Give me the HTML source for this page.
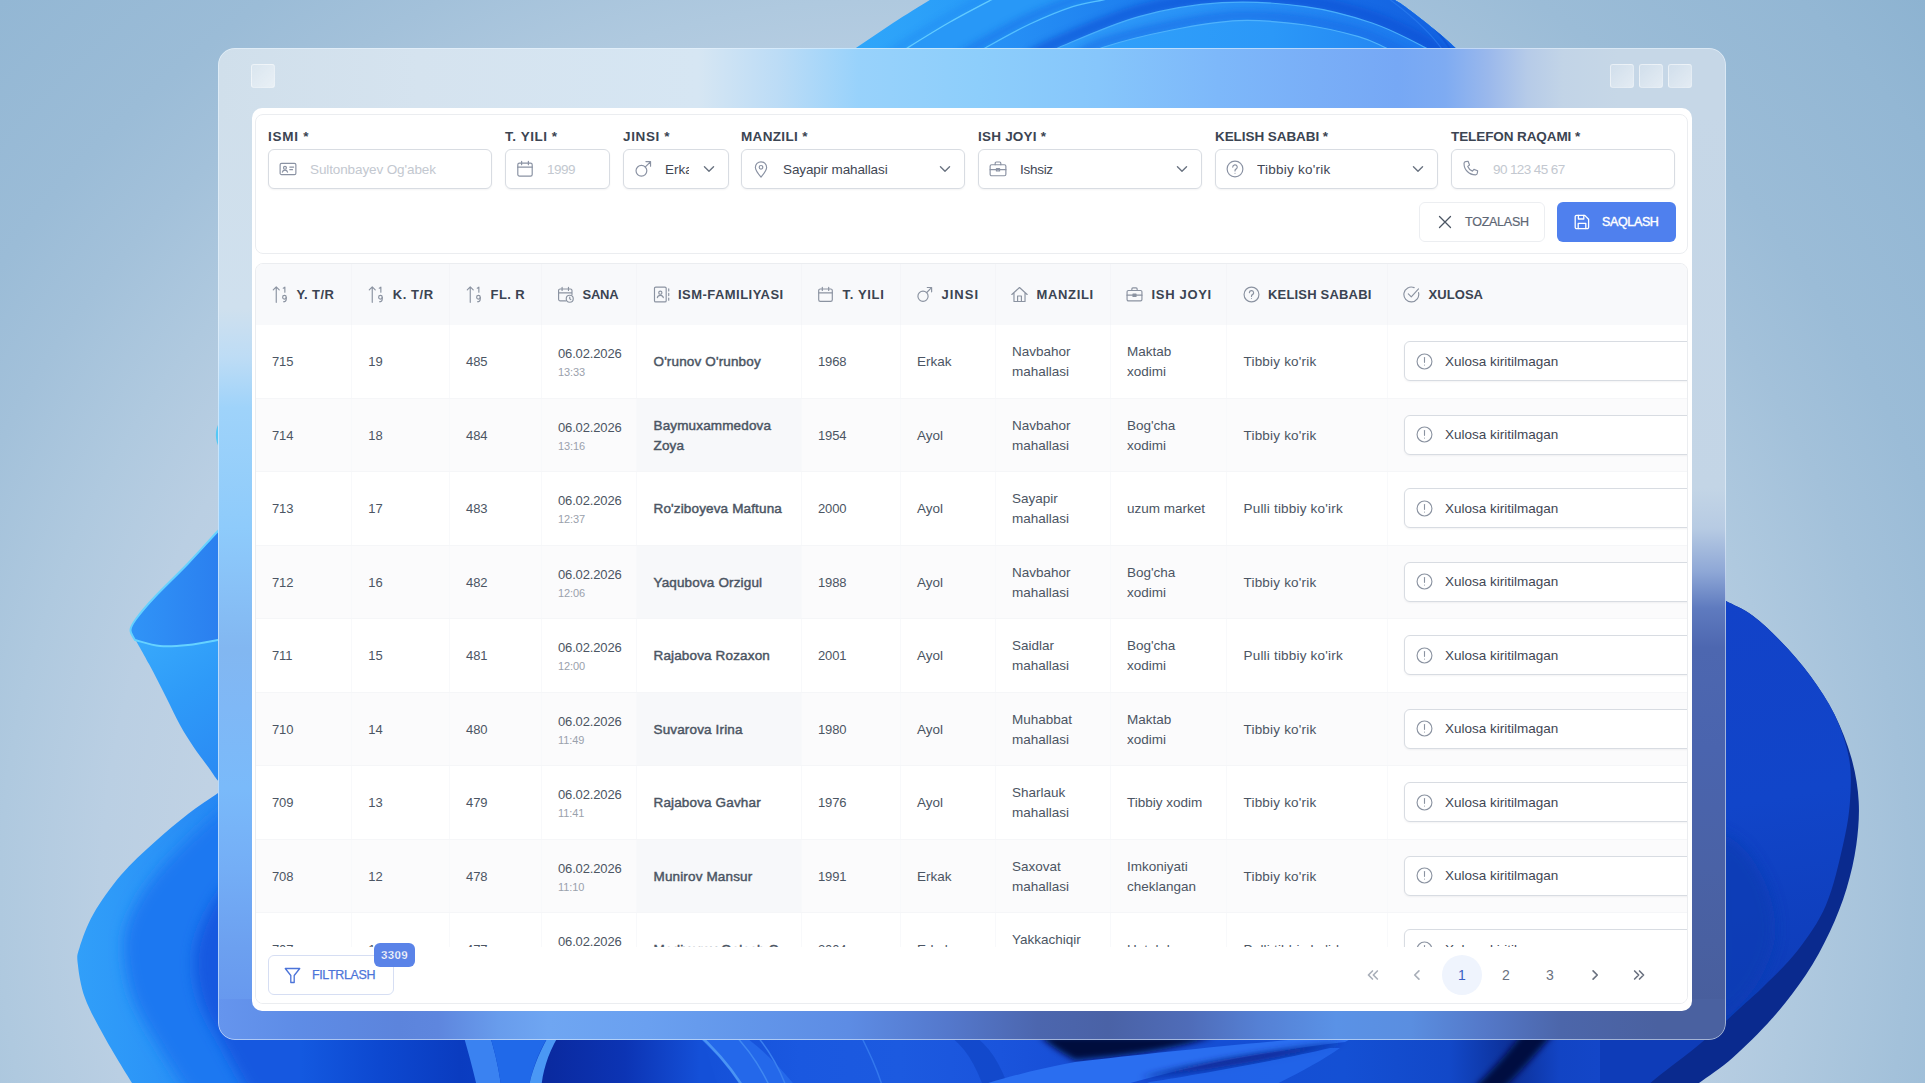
<!DOCTYPE html>
<html lang="uz">
<head>
<meta charset="utf-8">
<title>Qabul jurnali</title>
<style>
*{box-sizing:border-box;margin:0;padding:0}
html,body{width:1925px;height:1083px;overflow:hidden;background:#a9c3dc}
body{font-family:"Liberation Sans",sans-serif;color:#4b5563;position:relative}
#bg{position:absolute;left:0;top:0;width:1925px;height:1083px;display:block}
#win{position:absolute;left:218px;top:48px;width:1508px;height:992px;border-radius:17px;overflow:hidden;
  }
#win:after{content:'';position:absolute;inset:0;border-radius:17px;border:1.5px solid rgba(235,245,255,.55)}
#win .strip{position:absolute}
#st-top{left:0;top:0;width:1508px;height:72px;
  background:linear-gradient(90deg,#d0dfeb 0px,#d5e3ef 200px,#d6e6f3 480px,#bcdcf6 560px,#98d2fb 640px,#8dcefb 760px,#86c6fb 880px,#7db8fa 1000px,#79aef7 1100px,#76a8f5 1180px,#7eabf2 1227px,#9ab8ec 1270px,#b6cbe8 1310px,#c2d4e7 1345px,#c6d7e7 1400px,#c6d7e7 1508px)}
#st-left{left:0;top:60px;width:46px;height:905px;
  background:linear-gradient(180deg,#d0dfeb 0px,#cfe0ee 200px,#bddcf5 250px,#9fd3fa 300px,#8ecbfb 420px,#88c1f7 480px,#82b7f1 540px,#7fb8f6 600px,#7abafa 680px,#74aef6 760px,#6ca0f0 840px,#6697ee 905px)}
#st-right{right:0;top:60px;width:46px;height:905px;
  background:linear-gradient(180deg,#c6d7e7 0px,#c3d5e6 380px,#b7cbe3 420px,#8ea7d6 464px,#5f7bbf 500px,#4d67b0 540px,#4a64ae 640px,#4a62a6 760px,#485e9c 905px)}
#st-bot{left:0;bottom:0;width:1508px;height:41px;
  background:linear-gradient(90deg,#6595ee 0px,#5e8ce6 80px,#5c84dc 180px,#5e86de 220px,#689cec 280px,#6fa6f2 330px,#6aa0f0 430px,#6296ea 530px,#5d8ce4 630px,#5478cc 730px,#4c66ae 820px,#4a62a6 890px,#4f6cb8 970px,#5580d4 1040px,#5a92e6 1118px,#5a8ee0 1193px,#5478c8 1268px,#4c66aa 1343px,#4a61a0 1440px,#4a61a0 1508px)}
#panel{position:absolute;left:252px;top:108px;width:1440px;height:903px;background:#fff;border-radius:10px;overflow:hidden}
.tb{position:absolute;width:24px;height:24px;top:64px;border-radius:3px;background:linear-gradient(135deg,rgba(255,255,255,.2),rgba(255,255,255,.52));border:1.5px solid rgba(255,255,255,.38)}

.ic{width:16px;height:16px;fill:none;stroke:currentColor;stroke-width:1.15;stroke-linecap:round;stroke-linejoin:round;flex:none;display:block}
#form{position:absolute;left:3px;top:6px;width:1433px;height:140px;border:1px solid #ebedf0;border-radius:8px;background:#fff}
.fld{position:absolute;top:15px}
.fld label{display:block;font-weight:bold;font-size:13.5px;letter-spacing:.3px;color:#3b4452;line-height:14px;height:14px;margin-bottom:5px;white-space:nowrap}
.inp{height:40px;border:1px solid #d8dce2;border-radius:6px;background:#fff;display:flex;align-items:center;padding:0 12px 0 10px;font-size:13.5px;color:#3f4754;box-shadow:0 1px 2px rgba(16,24,40,.05);white-space:nowrap;overflow:hidden}
.inp .ic{color:#8a92a3;margin-right:13px;width:18px;height:18px;stroke-width:1.05}
.inp span{flex:1;overflow:hidden}
.inp.ph span{color:#c3c8d0}
.inp .chev{margin:0;color:#6b7482;width:14px;height:14px;stroke-width:1.6}
.btn{position:absolute;display:flex;align-items:center;height:40px;border-radius:6px;font-size:13.5px;white-space:nowrap}
.b-clear{left:1163px;top:87px;width:126px;border:1px solid #eceef1;color:#5d6674;padding-left:17px;background:#fff;font-size:12.5px;-webkit-text-stroke:.2px #5d6674}
.b-clear .ic{margin-right:12px;color:#4b5563;stroke-width:1.3}
.b-save{left:1301px;top:87px;width:119px;background:#4f80ee;color:#fff;padding-left:17px;font-size:12.5px;-webkit-text-stroke:.4px #fff}
.b-save .ic{margin-right:12px;stroke-width:1.3}
#tbl{position:absolute;left:3px;top:155px;width:1433px;height:741px;border:1px solid #ebedf0;border-radius:8px;background:#fff;overflow:hidden}
.thead{display:flex;height:61px;background:#f8f9fb;width:1500px}
.th{display:flex;align-items:center;padding:0 0 .5px 16px;font-weight:bold;font-size:13px;letter-spacing:.4px;color:#3b4452;border-right:1px solid #f4f5f8;white-space:nowrap}
.th .ic{color:#8b93a1;margin:0 8px 0 -.5px;width:17px;height:17px;stroke-width:1.1}
.tbody{height:622px;overflow:hidden}
.tr{display:flex;height:73.5px;width:1500px;border-bottom:1px solid #f5f6f8}
.tr.alt{background:#fbfbfc}
.td{display:flex;align-items:center;padding:2.4px 0 0 16px;font-size:13.5px;color:#4b5563;border-right:1px solid #f8f9fb;line-height:20px}
.c0,.c1,.c2,.c5{font-size:13px;letter-spacing:-.15px}
.c3{font-size:13px;letter-spacing:-.15px}
.c9{letter-spacing:.2px}
.tr.alt .c4{background:#f7f8fa}
.td.c10{padding-top:0}
.td small{display:block;font-size:11px;color:#9aa1ac;line-height:15px;letter-spacing:-.1px;margin-top:1px}
.td b{font-weight:normal;font-size:13.5px;color:#4b5563;letter-spacing:.15px;-webkit-text-stroke:.45px #4b5563}
.xbox{width:400px;height:40px;border:1px solid #d8dce2;border-radius:6px;display:flex;align-items:center;padding:1.2px 0 0 11px;background:#fff;box-shadow:0 1px 2px rgba(16,24,40,.05);color:#3f4754;white-space:nowrap}
.xbox .ic{color:#8b93a1;margin:-1px 12px 0 0;width:17px;height:17px;stroke-width:1.05}
.tfoot{position:absolute;left:0;top:684px;width:1436px;height:56px;background:#fff}
.b-filter{left:12px;top:7px;width:126px;border:1px solid #d6def3;color:#4c74d9;padding-left:16px;background:#fff;font-size:12.5px;-webkit-text-stroke:.25px #4c74d9}
.b-filter .ic{margin:0 11px 0 -1px;stroke-width:1.25;width:17px;height:17px}
.badge{position:absolute;left:105px;top:-13px;width:41px;height:24px;border-radius:6px;background:#5a83e8;color:#fff;font-style:normal;font-weight:bold;font-size:11.5px;text-align:center;line-height:24px}
.pager{position:absolute;left:0;top:6.5px;height:40px}
.pg{position:absolute;top:0;width:40px;height:40px;border-radius:50%;display:flex;align-items:center;justify-content:center;font-size:14px;color:#6b7280}
.pg.act{background:#eff4fd;color:#3b5fc4}
.pg.dis{color:#a9afb9}
.pg .ic{width:14px;height:14px;stroke-width:1.9}
</style>
</head>
<body>
<svg id="bg" viewBox="0 0 1925 1083">
<defs>
<radialGradient id="sky" cx="900" cy="900" r="1400" gradientUnits="userSpaceOnUse">
<stop offset="0" stop-color="#c2d3e5"/><stop offset=".5" stop-color="#c0d2e4"/><stop offset=".571" stop-color="#bacfe3"/><stop offset=".643" stop-color="#afc9df"/><stop offset=".721" stop-color="#a3c1da"/><stop offset=".786" stop-color="#9bbcd7"/><stop offset=".909" stop-color="#93b7d4"/><stop offset=".975" stop-color="#8db3d1"/><stop offset="1" stop-color="#8bb2d0"/>
</radialGradient>
<linearGradient id="gTop" x1="858" y1="0" x2="1456" y2="0" gradientUnits="userSpaceOnUse">
<stop offset="0" stop-color="#2fa6fa"/><stop offset=".3" stop-color="#2596f7"/><stop offset=".6" stop-color="#1e86f3"/><stop offset="1" stop-color="#1668e6"/>
</linearGradient>
<linearGradient id="gP2" x1="986" y1="0" x2="1420" y2="0" gradientUnits="userSpaceOnUse">
<stop offset="0" stop-color="#2792f6"/><stop offset=".4" stop-color="#1c7cee"/><stop offset="1" stop-color="#1464e2"/>
</linearGradient>
<linearGradient id="gP3" x1="1059" y1="0" x2="1425" y2="0" gradientUnits="userSpaceOnUse">
<stop offset="0" stop-color="#2e9af8"/><stop offset=".5" stop-color="#2890f6"/><stop offset="1" stop-color="#1c78ee"/>
</linearGradient>
<linearGradient id="gP4" x1="1102" y1="0" x2="1385" y2="0" gradientUnits="userSpaceOnUse">
<stop offset="0" stop-color="#30a0fa"/><stop offset=".6" stop-color="#2b98f8"/><stop offset="1" stop-color="#2488f3"/>
</linearGradient>
<linearGradient id="gE3" x1="0" y1="0" x2="0" y2="50" gradientUnits="userSpaceOnUse">
<stop offset="0" stop-color="#1462e2"/><stop offset="1" stop-color="#1a78ee"/>
</linearGradient>
<linearGradient id="gCupIn" x1="131" y1="0" x2="232" y2="0" gradientUnits="userSpaceOnUse">
<stop offset="0" stop-color="#3094f7"/><stop offset="1" stop-color="#2a7cee"/>
</linearGradient>
<linearGradient id="gCupOut" x1="131" y1="640" x2="232" y2="780" gradientUnits="userSpaceOnUse">
<stop offset="0" stop-color="#38aafc"/><stop offset=".45" stop-color="#2e9af8"/><stop offset="1" stop-color="#2a88f3"/>
</linearGradient>
<linearGradient id="gLow" x1="77" y1="0" x2="232" y2="0" gradientUnits="userSpaceOnUse">
<stop offset="0" stop-color="#319ff9"/><stop offset=".5" stop-color="#2b94f7"/><stop offset="1" stop-color="#2585f3"/>
</linearGradient>
<linearGradient id="gBot" x1="218" y1="0" x2="1720" y2="0" gradientUnits="userSpaceOnUse">
<stop offset="0.000" stop-color="#1359e0"/><stop offset="0.055" stop-color="#1359e0"/><stop offset="0.108" stop-color="#0d48d0"/><stop offset="0.161" stop-color="#0a3cc0"/><stop offset="0.321" stop-color="#1450d8"/><stop offset="0.387" stop-color="#1a58e0"/><stop offset="0.454" stop-color="#1c5ae0"/><stop offset="0.521" stop-color="#1a54dc"/><stop offset="0.587" stop-color="#164cd4"/><stop offset="0.750" stop-color="#1450d4"/><stop offset="0.820" stop-color="#1248c8"/><stop offset="0.861" stop-color="#0c3098"/><stop offset="0.893" stop-color="#1244c4"/><stop offset="0.944" stop-color="#1448cc"/><stop offset="0.987" stop-color="#1040c0"/><stop offset="1.000" stop-color="#1040c0"/>
</linearGradient>
<linearGradient id="gNavy" x1="550" y1="0" x2="700" y2="0" gradientUnits="userSpaceOnUse"><stop offset="0" stop-color="#0a2aa0"/><stop offset=".5" stop-color="#0c34b4"/><stop offset="1" stop-color="#1450d8"/></linearGradient>
<linearGradient id="gRight" x1="1726" y1="600" x2="1800" y2="1000" gradientUnits="userSpaceOnUse">
<stop offset="0" stop-color="#1242c8"/><stop offset=".5" stop-color="#1145c9"/><stop offset="1" stop-color="#0e3cb8"/>
</linearGradient>
<filter id="b6" x="-30%" y="-30%" width="160%" height="160%"><feGaussianBlur stdDeviation="7"/></filter>
<filter id="b3" x="-30%" y="-30%" width="160%" height="160%"><feGaussianBlur stdDeviation="3"/></filter>
<clipPath id="cLow"><path d="M236.0,781.0 C233.0,783.0 226.0,787.5 218.0,793.0 C210.0,798.5 198.6,805.8 188.0,814.0 C177.4,822.2 165.9,831.8 154.7,842.0 C143.5,852.2 131.2,863.0 121.0,875.0 C110.8,887.0 100.3,901.9 93.4,914.0 C86.5,926.1 82.1,939.4 79.5,947.7 C76.9,956.0 76.9,955.6 77.8,964.0 C78.7,972.4 80.5,985.8 85.0,998.0 C89.5,1010.2 96.7,1022.8 104.5,1037.0 C112.3,1051.2 126.1,1073.3 132.0,1083.0 C137.9,1092.7 138.7,1093.0 140.0,1095.0 L300,1095 L300,781 Z"/></clipPath>
<clipPath id="cRight"><path d="M1712.0,594.0 C1714.3,595.2 1719.3,597.4 1726.0,601.0 C1732.7,604.6 1743.2,608.7 1752.4,615.5 C1761.6,622.3 1771.7,631.9 1781.4,642.0 C1791.1,652.1 1801.6,663.9 1810.4,676.0 C1819.2,688.1 1828.1,700.8 1834.5,714.5 C1840.9,728.2 1846.4,743.6 1849.0,758.0 C1851.6,772.4 1851.0,786.5 1850.0,801.0 C1849.0,815.5 1847.0,827.7 1843.0,845.0 C1839.0,862.3 1833.5,887.5 1826.0,905.0 C1818.5,922.5 1808.2,936.7 1798.0,950.0 C1787.8,963.3 1774.7,975.3 1765.0,985.0 C1755.3,994.7 1748.2,1000.5 1740.0,1008.0 C1731.8,1015.5 1724.3,1022.7 1716.0,1030.0 C1707.7,1037.3 1699.3,1044.5 1690.0,1052.0 C1680.7,1059.5 1668.3,1068.3 1660.0,1075.0 C1651.7,1081.7 1643.3,1089.2 1640.0,1092.0 L1600,1092 L1600,594 Z"/></clipPath>
<clipPath id="cTop"><path d="M820.0,72.0 C826.1,67.9 844.4,55.7 856.6,47.5 C868.8,39.3 880.8,30.9 893.0,23.0 C905.2,15.1 921.1,5.3 929.8,0.0 C938.5,-5.3 942.5,-7.5 945.0,-9.0 L1380,-10 C1382.5,-8.3 1390.8,-2.8 1395.0,0.0 C1399.2,2.8 1398.3,1.6 1405.0,6.6 C1411.7,11.6 1426.7,23.2 1435.0,30.0 C1443.3,36.8 1449.2,41.8 1455.0,47.5 C1460.8,53.2 1467.5,61.2 1470.0,64.0 Z"/></clipPath>
</defs>
<rect width="1925" height="1083" fill="url(#sky)"/>
<!-- top bloom -->
<path d="M820.0,72.0 C826.1,67.9 844.4,55.7 856.6,47.5 C868.8,39.3 880.8,30.9 893.0,23.0 C905.2,15.1 921.1,5.3 929.8,0.0 C938.5,-5.3 942.5,-7.5 945.0,-9.0 L1380,-10 C1382.5,-8.3 1390.8,-2.8 1395.0,0.0 C1399.2,2.8 1398.3,1.6 1405.0,6.6 C1411.7,11.6 1426.7,23.2 1435.0,30.0 C1443.3,36.8 1449.2,41.8 1455.0,47.5 C1460.8,53.2 1467.5,61.2 1470.0,64.0 Z" fill="url(#gTop)"/>
<g clip-path="url(#cTop)">
<path d="M880.0,66.0 C884.7,62.9 896.3,54.8 908.0,47.5 C919.7,40.2 936.2,29.9 950.0,22.0 C963.8,14.1 981.0,5.2 991.0,0.0 C1001.0,-5.2 1006.8,-7.5 1010.0,-9.0" fill="none" stroke="#1a80f0" stroke-width="8" opacity=".35" filter="url(#b3)" transform="translate(-3,-4)"/>
<path d="M880.0,66.0 C884.7,62.9 896.3,54.8 908.0,47.5 C919.7,40.2 936.2,29.9 950.0,22.0 C963.8,14.1 981.0,5.2 991.0,0.0 C1001.0,-5.2 1006.8,-7.5 1010.0,-9.0 L1500,-10 L1500,80 L880,80 Z" fill="#2898f7"/>
<path d="M955.0,66.0 C960.2,62.9 973.5,54.5 986.0,47.5 C998.5,40.5 1015.5,30.8 1030.0,24.0 C1044.5,17.2 1060.6,10.6 1072.7,6.6 C1084.8,2.6 1093.9,1.9 1102.6,0.0 C1111.3,-1.9 1121.3,-4.2 1125.0,-5.0" fill="none" stroke="#1670e8" stroke-width="10" opacity=".55" filter="url(#b3)" transform="translate(-3,-5)"/>
<path d="M955.0,66.0 C960.2,62.9 973.5,54.5 986.0,47.5 C998.5,40.5 1015.5,30.8 1030.0,24.0 C1044.5,17.2 1060.6,10.6 1072.7,6.6 C1084.8,2.6 1093.9,1.9 1102.6,0.0 C1111.3,-1.9 1121.3,-4.2 1125.0,-5.0 L1500,-10 L1500,80 L955,80 Z" fill="url(#gP2)"/>
<path d="M1030.0,62.0 C1034.8,59.6 1040.8,55.1 1059.0,47.5 C1077.2,39.9 1111.8,24.1 1139.0,16.6 C1166.2,9.1 1194.3,4.4 1222.0,2.7 C1249.7,1.0 1280.0,3.2 1305.0,6.6 C1330.0,10.0 1352.0,16.2 1372.0,23.0 C1392.0,29.8 1412.0,40.7 1425.0,47.5 C1438.0,54.3 1445.8,61.2 1450.0,64.0" fill="none" stroke="#0c50d4" stroke-width="12" opacity=".6" filter="url(#b3)" transform="translate(0,-6)"/>
<path d="M1030.0,62.0 C1034.8,59.6 1040.8,55.1 1059.0,47.5 C1077.2,39.9 1111.8,24.1 1139.0,16.6 C1166.2,9.1 1194.3,4.4 1222.0,2.7 C1249.7,1.0 1280.0,3.2 1305.0,6.6 C1330.0,10.0 1352.0,16.2 1372.0,23.0 C1392.0,29.8 1412.0,40.7 1425.0,47.5 C1438.0,54.3 1445.8,61.2 1450.0,64.0 L1450,80 L1030,80 Z" fill="url(#gP3)"/>
<path d="M1075.0,62.0 C1079.6,59.6 1086.4,52.8 1102.6,47.5 C1118.8,42.2 1149.3,34.5 1172.0,30.0 C1194.7,25.5 1216.8,21.4 1239.0,20.6 C1261.2,19.8 1285.1,22.3 1305.0,25.0 C1324.9,27.7 1345.3,32.9 1358.6,36.6 C1371.9,40.4 1376.4,43.6 1385.0,47.5 C1393.6,51.4 1405.8,57.9 1410.0,60.0" fill="none" stroke="#1668e4" stroke-width="10" opacity=".55" filter="url(#b3)" transform="translate(0,-5)"/>
<path d="M1075.0,62.0 C1079.6,59.6 1086.4,52.8 1102.6,47.5 C1118.8,42.2 1149.3,34.5 1172.0,30.0 C1194.7,25.5 1216.8,21.4 1239.0,20.6 C1261.2,19.8 1285.1,22.3 1305.0,25.0 C1324.9,27.7 1345.3,32.9 1358.6,36.6 C1371.9,40.4 1376.4,43.6 1385.0,47.5 C1393.6,51.4 1405.8,57.9 1410.0,60.0 L1410,80 L1075,80 Z" fill="url(#gP4)"/>
<g fill="none" stroke-linecap="round">
<path d="M880.0,66.0 C884.7,62.9 896.3,54.8 908.0,47.5 C919.7,40.2 936.2,29.9 950.0,22.0 C963.8,14.1 981.0,5.2 991.0,0.0 C1001.0,-5.2 1006.8,-7.5 1010.0,-9.0" stroke="#62cbff" stroke-width="1.4"/>
<path d="M955.0,66.0 C960.2,62.9 973.5,54.5 986.0,47.5 C998.5,40.5 1015.5,30.8 1030.0,24.0 C1044.5,17.2 1060.6,10.6 1072.7,6.6 C1084.8,2.6 1093.9,1.9 1102.6,0.0 C1111.3,-1.9 1121.3,-4.2 1125.0,-5.0" stroke="#55c0ff" stroke-width="1.3"/>
<path d="M1030.0,62.0 C1034.8,59.6 1040.8,55.1 1059.0,47.5 C1077.2,39.9 1111.8,24.1 1139.0,16.6 C1166.2,9.1 1194.3,4.4 1222.0,2.7 C1249.7,1.0 1280.0,3.2 1305.0,6.6 C1330.0,10.0 1352.0,16.2 1372.0,23.0 C1392.0,29.8 1412.0,40.7 1425.0,47.5 C1438.0,54.3 1445.8,61.2 1450.0,64.0" stroke="#48aefb" stroke-width="1.2"/>
<path d="M1075.0,62.0 C1079.6,59.6 1086.4,52.8 1102.6,47.5 C1118.8,42.2 1149.3,34.5 1172.0,30.0 C1194.7,25.5 1216.8,21.4 1239.0,20.6 C1261.2,19.8 1285.1,22.3 1305.0,25.0 C1324.9,27.7 1345.3,32.9 1358.6,36.6 C1371.9,40.4 1376.4,43.6 1385.0,47.5 C1393.6,51.4 1405.8,57.9 1410.0,60.0" stroke="#4fb2fc" stroke-width="1.2"/>
<path d="M1398,-4 C1420,12 1440,32 1452,52" stroke="#0f4fd0" stroke-width="2" opacity=".6"/>
<path d="M1385,-4 C1410,14 1432,34 1444,52" stroke="#2a7cf0" stroke-width="1.2" opacity=".7"/>
</g>
</g>
<!-- left cup petal -->
<path d="M236.0,513.0 C233.0,516.0 226.0,522.6 218.0,531.0 C210.0,539.4 198.6,552.5 188.0,563.5 C177.4,574.5 163.4,587.8 154.7,597.0 C146.0,606.2 140.0,613.5 136.0,619.0 C132.0,624.5 130.7,626.5 130.5,630.0 C130.3,633.5 134.2,638.3 135.0,640.0 C139.2,641.0 151.2,645.2 160.0,646.0 C168.8,646.8 178.3,646.0 188.0,645.0 C197.7,644.0 210.0,641.5 218.0,640.0 C226.0,638.5 233.0,636.7 236.0,636.0 Z" fill="url(#gCupIn)"/>
<path d="M130.5,631.0 C133.6,636.5 143.1,653.0 149.0,664.0 C154.9,675.0 160.8,686.8 166.0,697.0 C171.2,707.2 175.4,716.7 180.0,725.0 C184.6,733.3 188.6,739.6 193.6,747.0 C198.6,754.4 205.9,763.9 210.0,769.5 C214.1,775.1 213.7,775.6 218.0,780.7 C222.3,785.8 233.0,796.8 236.0,800.0 L236,636  C233.0,636.7 226.0,638.5 218.0,640.0 C210.0,641.5 197.7,644.0 188.0,645.0 C178.3,646.0 168.8,646.8 160.0,646.0 C151.2,645.2 139.2,641.0 135.0,640.0 Z" fill="url(#gCupOut)"/>
<path d="M236.0,513.0 C233.0,516.0 226.0,522.6 218.0,531.0 C210.0,539.4 198.6,552.5 188.0,563.5 C177.4,574.5 163.4,587.8 154.7,597.0 C146.0,606.2 140.0,613.5 136.0,619.0 C132.0,624.5 130.7,626.5 130.5,630.0 C130.3,633.5 134.2,638.3 135.0,640.0 C139.2,641.0 151.2,645.2 160.0,646.0 C168.8,646.8 178.3,646.0 188.0,645.0 C197.7,644.0 210.0,641.5 218.0,640.0 C226.0,638.5 233.0,636.7 236.0,636.0" fill="none" stroke="#66d2ff" stroke-width="2"/>
<!-- small tip on left edge of window -->
<path d="M220,421 C214.5,429 214.5,441 220,449 Z" fill="#55c8f6"/>
<!-- bottom -->
<rect x="200" y="1020" width="1488" height="70" fill="url(#gBot)"/>
<path d="M462,1030 C468,1052 474,1072 478,1092 L502,1092 C499,1070 495,1050 488,1030 Z" fill="#3a82f1"/>
<path d="M488,1030 L552,1030 C538,1052 531,1072 528,1092 L502,1092 C499,1070 495,1050 488,1030Z" fill="#2069e9"/>
<path d="M560,1030 C547,1052 541,1072 540,1092 L720,1092 L700,1030Z" fill="url(#gNavy)"/>
<path d="M552,1030 C539,1052 531,1072 528,1092 L541,1092 C542,1072 548,1052 562,1030 Z" fill="#4a98f5"/>
<path d="M690,1030 C712,1048 730,1068 744,1092 L800,1092 C780,1066 760,1046 735,1030Z" fill="#2468ea"/>
<path d="M694,1030 C714,1048 732,1068 746,1092" fill="none" stroke="#4a94f4" stroke-width="2.5"/>
<path d="M730,1030 C748,1048 762,1068 772,1092" fill="none" stroke="#3f88f2" stroke-width="1.5"/>
<path d="M752,1030 C768,1048 780,1068 788,1092" fill="none" stroke="#3a80f0" stroke-width="1.5"/>
<path d="M858,1030 C868,1050 878,1070 884,1092" fill="none" stroke="#3378ee" stroke-width="1.5"/>
<path d="M940,1030 C960,1040 975,1060 985,1092 L1010,1092 C1000,1060 985,1040 965,1030Z" fill="#0f44c4" opacity=".7"/>
<path d="M1040,1036 L1215,1036 C1180,1048 1130,1056 1075,1060 C1060,1052 1048,1044 1040,1036 Z" fill="#04103c" filter="url(#b3)"/>
<path d="M1360,1034 C1280,1040 1160,1052 1075,1062 C1030,1070 990,1082 960,1092 L1100,1092 C1170,1070 1260,1052 1345,1042 Z" fill="#2a6ef0"/>
<path d="M1345,1042 C1260,1052 1190,1064 1140,1078 C1200,1072 1280,1058 1330,1046Z" fill="#0a2590" filter="url(#b3)"/>
<path d="M1330,1048 C1280,1060 1200,1074 1150,1082 L1120,1092 L1260,1092 C1290,1078 1320,1062 1340,1048Z" fill="#2468ec" opacity=".8"/>
<path d="M1556,1030 C1540,1050 1520,1072 1500,1092 L1470,1092 C1490,1072 1512,1050 1524,1030Z" fill="#050f40" filter="url(#b3)"/>
<path d="M1660,1030 C1652,1052 1640,1072 1626,1092" fill="none" stroke="#0a2890" stroke-width="3" opacity=".8"/>
<!-- left lower petal -->
<path d="M236.0,781.0 C233.0,783.0 226.0,787.5 218.0,793.0 C210.0,798.5 198.6,805.8 188.0,814.0 C177.4,822.2 165.9,831.8 154.7,842.0 C143.5,852.2 131.2,863.0 121.0,875.0 C110.8,887.0 100.3,901.9 93.4,914.0 C86.5,926.1 82.1,939.4 79.5,947.7 C76.9,956.0 76.9,955.6 77.8,964.0 C78.7,972.4 80.5,985.8 85.0,998.0 C89.5,1010.2 96.7,1022.8 104.5,1037.0 C112.3,1051.2 126.1,1073.3 132.0,1083.0 C137.9,1092.7 138.7,1093.0 140.0,1095.0 L300,1095 L300,781 Z" fill="url(#gLow)"/>
<g clip-path="url(#cLow)">
<path d="M240.0,796.0 C232.5,802.3 209.2,820.7 195.0,834.0 C180.8,847.3 165.7,862.5 155.0,876.0 C144.3,889.5 136.2,902.7 131.0,915.0 C125.8,927.3 123.7,936.2 124.0,950.0 C124.3,963.8 127.3,982.2 133.0,998.0 C138.7,1013.8 148.5,1028.8 158.0,1045.0 C167.5,1061.2 184.7,1086.7 190.0,1095.0 L330,1095 L330,798 Z" fill="#1f78f1" filter="url(#b6)"/>
<path d="M250.0,860.0 C244.2,866.7 224.2,885.0 215.0,900.0 C205.8,915.0 197.5,933.3 195.0,950.0 C192.5,966.7 195.0,983.3 200.0,1000.0 C205.0,1016.7 216.7,1034.2 225.0,1050.0 C233.3,1065.8 245.8,1087.5 250.0,1095.0 L330,1095 L330,860 Z" fill="#1359e0" filter="url(#b6)"/>
</g>
<!-- right petals -->
<path d="M1712.0,594.0 C1714.3,595.2 1719.3,597.4 1726.0,601.0 C1732.7,604.6 1743.2,608.7 1752.4,615.5 C1761.6,622.3 1771.7,631.9 1781.4,642.0 C1791.1,652.1 1801.6,663.9 1810.4,676.0 C1819.2,688.1 1827.7,700.8 1834.5,714.5 C1841.3,728.2 1847.4,743.5 1851.4,758.0 C1855.4,772.5 1857.9,787.0 1858.7,801.5 C1859.5,816.0 1858.3,830.5 1856.3,845.0 C1854.3,859.5 1851.0,873.9 1846.6,888.4 C1842.2,902.9 1836.5,917.4 1829.7,931.9 C1822.9,946.4 1815.2,960.8 1805.6,975.3 C1795.9,989.8 1783.9,1005.1 1771.8,1018.8 C1759.7,1032.5 1745.1,1046.7 1733.0,1057.4 C1720.9,1068.1 1707.0,1077.1 1699.0,1083.0 C1691.0,1088.9 1687.3,1091.3 1685.0,1093.0 L1600,1093 L1600,594 Z" fill="#0a2a8e"/>
<path d="M1712.0,594.0 C1714.3,595.2 1719.3,597.4 1726.0,601.0 C1732.7,604.6 1743.2,608.7 1752.4,615.5 C1761.6,622.3 1771.7,631.9 1781.4,642.0 C1791.1,652.1 1801.6,663.9 1810.4,676.0 C1819.2,688.1 1828.1,700.8 1834.5,714.5 C1840.9,728.2 1846.4,743.6 1849.0,758.0 C1851.6,772.4 1851.0,786.5 1850.0,801.0 C1849.0,815.5 1847.0,827.7 1843.0,845.0 C1839.0,862.3 1833.5,887.5 1826.0,905.0 C1818.5,922.5 1808.2,936.7 1798.0,950.0 C1787.8,963.3 1774.7,975.3 1765.0,985.0 C1755.3,994.7 1748.2,1000.5 1740.0,1008.0 C1731.8,1015.5 1724.3,1022.7 1716.0,1030.0 C1707.7,1037.3 1699.3,1044.5 1690.0,1052.0 C1680.7,1059.5 1668.3,1068.3 1660.0,1075.0 C1651.7,1081.7 1643.3,1089.2 1640.0,1092.0 L1600,1092 L1600,594 Z" fill="url(#gRight)"/>
<g clip-path="url(#cRight)">
<path d="M1716.0,830.0 C1720.8,833.3 1736.3,840.0 1745.0,850.0 C1753.7,860.0 1763.0,875.8 1768.0,890.0 C1773.0,904.2 1776.0,920.8 1775.0,935.0 C1774.0,949.2 1767.8,963.3 1762.0,975.0 C1756.2,986.7 1747.7,996.7 1740.0,1005.0 C1732.3,1013.3 1720.0,1021.7 1716.0,1025.0 Z" fill="#0f3cb4" opacity=".8" filter="url(#b6)"/>
</g>
</svg>
<div id="win">
<div class="strip" id="st-left"></div>
<div class="strip" id="st-right"></div>
<div class="strip" id="st-top"></div>
<div class="strip" id="st-bot"></div>
</div>
<div class="tb" style="left:251px"></div>
<div class="tb" style="left:1609.5px"></div>
<div class="tb" style="left:1639px"></div>
<div class="tb" style="left:1668px"></div>
<div id="panel">
<div id="form">
<div class="fld" style="left:12px;width:224px"><label style="letter-spacing:0.73px">ISMI *</label><div class="inp ph"><svg class="ic" viewBox="0 0 16 16"><rect x="1" y="3" width="14" height="10" rx="1.3"/><circle cx="5.3" cy="6.9" r="1.3"/><path d="M3 10.8c.3-1.3 1.2-1.8 2.3-1.8s2 .5 2.3 1.8M9.6 6.3h3.4M9.6 8.6h2.4"/></svg><span style="letter-spacing:-0.11px">Sultonbayev Og'abek</span></div></div>
<div class="fld" style="left:249px;width:105px"><label style="letter-spacing:0.54px">T. YILI *</label><div class="inp ph"><svg class="ic" viewBox="0 0 16 16"><rect x="1.6" y="2.8" width="12.8" height="11.6" rx="1.5"/><path d="M1.6 6.4h12.8M5 1.2v3M11 1.2v3"/></svg><span style="letter-spacing:-0.48px">1999</span></div></div>
<div class="fld" style="left:367px;width:106px"><label style="letter-spacing:0.64px">JINSI *</label><div class="inp"><svg class="ic" viewBox="0 0 16 16"><circle cx="6.6" cy="9.6" r="4.8"/><path d="M10.1 6.1l4.5-4.5M10.6 1.4h4.1v4.1"/></svg><span style="flex:none;width:23.5px;margin-right:13.5px">Erkak</span><svg class="ic chev" viewBox="0 0 16 16"><path d="M2.8 5.400L8 10.600l5.200-5.2"/></svg></div></div>
<div class="fld" style="left:485px;width:224px"><label style="letter-spacing:0.34px">MANZILI *</label><div class="inp"><svg class="ic" viewBox="0 0 16 16"><path d="M8 15.2c-3-3.6-5-6-5-8.6a5 5 0 0 1 10 0c0 2.600-2 5-5 8.600z"/><circle cx="8" cy="6.5" r="1.6"/></svg><span style="letter-spacing:-0.12px">Sayapir mahallasi</span><svg class="ic chev" viewBox="0 0 16 16"><path d="M2.8 5.400L8 10.600l5.200-5.2"/></svg></div></div>
<div class="fld" style="left:722px;width:224px"><label style="letter-spacing:0.22px">ISH JOYI *</label><div class="inp"><svg class="ic" viewBox="0 0 16 16"><rect x="1" y="4.2" width="14" height="9.8" rx="1.3"/><path d="M5.5 4.200v-1.400a1 1 0 0 1 1-1h3a1 1 0 0 1 1 1v1.400M1 8.600h14M6.6 7.600h2.800v2.200h-2.800z"/></svg><span style="letter-spacing:-0.28px">Ishsiz</span><svg class="ic chev" viewBox="0 0 16 16"><path d="M2.8 5.400L8 10.600l5.200-5.2"/></svg></div></div>
<div class="fld" style="left:959px;width:223px"><label style="letter-spacing:-0.07px">KELISH SABABI *</label><div class="inp"><svg class="ic" viewBox="0 0 16 16"><circle cx="8" cy="8" r="7"/><path d="M6 6.300a2 2 0 1 1 2.9 1.800c-.6.300-.9.700-.9 1.400v.3"/><circle cx="8" cy="11.8" r=".5" fill="currentColor" stroke="none"/></svg><span style="letter-spacing:0.24px">Tibbiy ko'rik</span><svg class="ic chev" viewBox="0 0 16 16"><path d="M2.8 5.400L8 10.600l5.200-5.2"/></svg></div></div>
<div class="fld" style="left:1195px;width:224px"><label style="letter-spacing:-0.09px">TELEFON RAQAMI *</label><div class="inp ph"><svg class="ic" viewBox="0 0 16 16"><path d="M3.2 1.400l2.200-.3 1.3 3.300-1.6 1.300c.8 1.9 2.3 3.4 4.2 4.200l1.300-1.6 3.3 1.300-.3 2.200c-.1.800-.8 1.400-1.6 1.400C6.3 13.2 1.8 8.7 1.8 3c0-.8.600-1.5 1.400-1.600z"/></svg><span style="letter-spacing:-0.6px">90 123 45 67</span></div></div>
<div class="btn b-clear"><svg class="ic" viewBox="0 0 16 16"><path d="M2.5 2.500l11 11M13.5 2.500l-11 11"/></svg><span style="letter-spacing:-0.25px">TOZALASH</span></div><div class="btn b-save"><svg class="ic" viewBox="0 0 16 16"><path d="M2.6 1.400h8.200l3.8 3.800v8a1.4 1.4 0 0 1-1.4 1.400H2.600a1.4 1.4 0 0 1-1.400-1.400V2.800a1.4 1.4 0 0 1 1.400-1.400z"/><path d="M4.4 1.400v3.600h5.400V1.400M4.2 14.600V9.400h7.600v5.2"/></svg><span style="letter-spacing:-0.36px">SAQLASH</span></div>
</div>
<div id="tbl">
<div class="thead"><div class="th" style="width:96.3px"><svg class="ic" viewBox="0 0 16 16"><path d="M4 15.4V.8M1.2 3.6l2.8-2.800 2.800 2.800"/><path d="M10.6 2.100l1.500-1v4.800" stroke-width="1.1"/><circle cx="11.7" cy="10.6" r="1.7" stroke-width="1.1"/><path d="M13.4 10.6v1.600c0 1.600-.9 2.600-2.600 2.600" stroke-width="1.1"/></svg><span style="letter-spacing:0.38px">Y. T/R</span></div><div class="th" style="width:97.8px"><svg class="ic" viewBox="0 0 16 16"><path d="M4 15.4V.8M1.2 3.6l2.8-2.800 2.800 2.800"/><path d="M10.6 2.100l1.500-1v4.800" stroke-width="1.1"/><circle cx="11.7" cy="10.6" r="1.7" stroke-width="1.1"/><path d="M13.4 10.6v1.600c0 1.600-.9 2.600-2.600 2.600" stroke-width="1.1"/></svg><span style="letter-spacing:0.55px">K. T/R</span></div><div class="th" style="width:91.9px"><svg class="ic" viewBox="0 0 16 16"><path d="M4 15.4V.8M1.2 3.6l2.8-2.800 2.800 2.800"/><path d="M10.6 2.100l1.500-1v4.800" stroke-width="1.1"/><circle cx="11.7" cy="10.6" r="1.7" stroke-width="1.1"/><path d="M13.4 10.6v1.600c0 1.600-.9 2.600-2.600 2.600" stroke-width="1.1"/></svg><span style="letter-spacing:0.4px">FL. R</span></div><div class="th" style="width:95.5px"><svg class="ic" viewBox="0 0 16 16"><path d="M8 14H3a1.5 1.5 0 0 1-1.500-1.500V4.300A1.5 1.5 0 0 1 3 2.800h9.600a1.5 1.5 0 0 1 1.5 1.500V8M1.5 6.400h12.600M4.8 1.200v3M10.8 1.200v3"/><circle cx="12" cy="12" r="3.3"/><path d="M12 10.400V12l1 .8"/></svg><span style="letter-spacing:-0.25px">SANA</span></div><div class="th" style="width:164.5px"><svg class="ic" viewBox="0 0 16 16"><rect x="1.4" y="1" width="11" height="14" rx="1.2"/><circle cx="6.9" cy="6.3" r="1.5"/><path d="M4.1 11c.3-1.5 1.400-2.2 2.800-2.200s2.500.7 2.8 2.200M14.8 2.600v2M14.8 7v2M14.8 11.400v2"/></svg><span style="letter-spacing:0.46px">ISM-FAMILIYASI</span></div><div class="th" style="width:99px"><svg class="ic" viewBox="0 0 16 16"><rect x="1.6" y="2.8" width="12.8" height="11.6" rx="1.5"/><path d="M1.6 6.4h12.8M5 1.2v3M11 1.2v3"/></svg><span style="letter-spacing:0.66px">T. YILI</span></div><div class="th" style="width:95px"><svg class="ic" viewBox="0 0 16 16"><circle cx="6.6" cy="9.6" r="4.8"/><path d="M10.1 6.1l4.5-4.5M10.6 1.4h4.1v4.1"/></svg><span style="letter-spacing:1.02px">JINSI</span></div><div class="th" style="width:115px"><svg class="ic" viewBox="0 0 16 16"><path d="M.8 8L8 1.4 15.2 8M2.8 6.400v8.200h10.400V6.400M6.2 14.600V9.400h3.600v5.2"/></svg><span style="letter-spacing:0.65px">MANZILI</span></div><div class="th" style="width:116.5px"><svg class="ic" viewBox="0 0 16 16"><rect x="1" y="4.2" width="14" height="9.8" rx="1.3"/><path d="M5.5 4.200v-1.400a1 1 0 0 1 1-1h3a1 1 0 0 1 1 1v1.400M1 8.600h14M6.6 7.600h2.800v2.200h-2.800z"/></svg><span style="letter-spacing:0.68px">ISH JOYI</span></div><div class="th" style="width:160.5px"><svg class="ic" viewBox="0 0 16 16"><circle cx="8" cy="8" r="7"/><path d="M6 6.300a2 2 0 1 1 2.9 1.800c-.6.300-.9.700-.9 1.400v.3"/><circle cx="8" cy="11.8" r=".5" fill="currentColor" stroke="none"/></svg><span style="letter-spacing:0.19px">KELISH SABABI</span></div><div class="th" style="width:340px"><svg class="ic" viewBox="0 0 16 16"><path d="M14.6 6.200A7 7 0 1 1 10.5 1.5"/><path d="M5 7.400l2.8 2.8 6.800-7.4"/></svg><span style="letter-spacing:0.07px">XULOSA</span></div></div>
<div class="tbody">
<div class="tr"><div class="td c0" style="width:96.3px">715</div><div class="td c1" style="width:97.8px">19</div><div class="td c2" style="width:91.9px">485</div><div class="td c3" style="width:95.5px"><div>06.02.2026<small>13:33</small></div></div><div class="td c4" style="width:164.5px"><b>O'runov O'runboy</b></div><div class="td c5" style="width:99px">1968</div><div class="td c6" style="width:95px">Erkak</div><div class="td c7" style="width:115px"><div>Navbahor<br>mahallasi</div></div><div class="td c8" style="width:116.5px"><div>Maktab<br>xodimi</div></div><div class="td c9" style="width:160.5px">Tibbiy ko'rik</div><div class="td c10" style="width:340px"><div class="xbox"><svg class="ic" viewBox="0 0 16 16"><circle cx="8" cy="8" r="7"/><path d="M8 4.200v4.6"/><circle cx="8" cy="11.4" r=".5" fill="currentColor" stroke="none"/></svg><span>Xulosa kiritilmagan</span></div></div></div>
<div class="tr alt"><div class="td c0" style="width:96.3px">714</div><div class="td c1" style="width:97.8px">18</div><div class="td c2" style="width:91.9px">484</div><div class="td c3" style="width:95.5px"><div>06.02.2026<small>13:16</small></div></div><div class="td c4" style="width:164.5px"><b>Baymuxammedova<br>Zoya</b></div><div class="td c5" style="width:99px">1954</div><div class="td c6" style="width:95px">Ayol</div><div class="td c7" style="width:115px"><div>Navbahor<br>mahallasi</div></div><div class="td c8" style="width:116.5px"><div>Bog'cha<br>xodimi</div></div><div class="td c9" style="width:160.5px">Tibbiy ko'rik</div><div class="td c10" style="width:340px"><div class="xbox"><svg class="ic" viewBox="0 0 16 16"><circle cx="8" cy="8" r="7"/><path d="M8 4.200v4.6"/><circle cx="8" cy="11.4" r=".5" fill="currentColor" stroke="none"/></svg><span>Xulosa kiritilmagan</span></div></div></div>
<div class="tr"><div class="td c0" style="width:96.3px">713</div><div class="td c1" style="width:97.8px">17</div><div class="td c2" style="width:91.9px">483</div><div class="td c3" style="width:95.5px"><div>06.02.2026<small>12:37</small></div></div><div class="td c4" style="width:164.5px"><b>Ro'ziboyeva Maftuna</b></div><div class="td c5" style="width:99px">2000</div><div class="td c6" style="width:95px">Ayol</div><div class="td c7" style="width:115px"><div>Sayapir<br>mahallasi</div></div><div class="td c8" style="width:116.5px"><div>uzum market</div></div><div class="td c9" style="width:160.5px">Pulli tibbiy ko'irk</div><div class="td c10" style="width:340px"><div class="xbox"><svg class="ic" viewBox="0 0 16 16"><circle cx="8" cy="8" r="7"/><path d="M8 4.200v4.6"/><circle cx="8" cy="11.4" r=".5" fill="currentColor" stroke="none"/></svg><span>Xulosa kiritilmagan</span></div></div></div>
<div class="tr alt"><div class="td c0" style="width:96.3px">712</div><div class="td c1" style="width:97.8px">16</div><div class="td c2" style="width:91.9px">482</div><div class="td c3" style="width:95.5px"><div>06.02.2026<small>12:06</small></div></div><div class="td c4" style="width:164.5px"><b>Yaqubova Orzigul</b></div><div class="td c5" style="width:99px">1988</div><div class="td c6" style="width:95px">Ayol</div><div class="td c7" style="width:115px"><div>Navbahor<br>mahallasi</div></div><div class="td c8" style="width:116.5px"><div>Bog'cha<br>xodimi</div></div><div class="td c9" style="width:160.5px">Tibbiy ko'rik</div><div class="td c10" style="width:340px"><div class="xbox"><svg class="ic" viewBox="0 0 16 16"><circle cx="8" cy="8" r="7"/><path d="M8 4.200v4.6"/><circle cx="8" cy="11.4" r=".5" fill="currentColor" stroke="none"/></svg><span>Xulosa kiritilmagan</span></div></div></div>
<div class="tr"><div class="td c0" style="width:96.3px">711</div><div class="td c1" style="width:97.8px">15</div><div class="td c2" style="width:91.9px">481</div><div class="td c3" style="width:95.5px"><div>06.02.2026<small>12:00</small></div></div><div class="td c4" style="width:164.5px"><b>Rajabova Rozaxon</b></div><div class="td c5" style="width:99px">2001</div><div class="td c6" style="width:95px">Ayol</div><div class="td c7" style="width:115px"><div>Saidlar<br>mahallasi</div></div><div class="td c8" style="width:116.5px"><div>Bog'cha<br>xodimi</div></div><div class="td c9" style="width:160.5px">Pulli tibbiy ko'irk</div><div class="td c10" style="width:340px"><div class="xbox"><svg class="ic" viewBox="0 0 16 16"><circle cx="8" cy="8" r="7"/><path d="M8 4.200v4.6"/><circle cx="8" cy="11.4" r=".5" fill="currentColor" stroke="none"/></svg><span>Xulosa kiritilmagan</span></div></div></div>
<div class="tr alt"><div class="td c0" style="width:96.3px">710</div><div class="td c1" style="width:97.8px">14</div><div class="td c2" style="width:91.9px">480</div><div class="td c3" style="width:95.5px"><div>06.02.2026<small>11:49</small></div></div><div class="td c4" style="width:164.5px"><b>Suvarova Irina</b></div><div class="td c5" style="width:99px">1980</div><div class="td c6" style="width:95px">Ayol</div><div class="td c7" style="width:115px"><div>Muhabbat<br>mahallasi</div></div><div class="td c8" style="width:116.5px"><div>Maktab<br>xodimi</div></div><div class="td c9" style="width:160.5px">Tibbiy ko'rik</div><div class="td c10" style="width:340px"><div class="xbox"><svg class="ic" viewBox="0 0 16 16"><circle cx="8" cy="8" r="7"/><path d="M8 4.200v4.6"/><circle cx="8" cy="11.4" r=".5" fill="currentColor" stroke="none"/></svg><span>Xulosa kiritilmagan</span></div></div></div>
<div class="tr"><div class="td c0" style="width:96.3px">709</div><div class="td c1" style="width:97.8px">13</div><div class="td c2" style="width:91.9px">479</div><div class="td c3" style="width:95.5px"><div>06.02.2026<small>11:41</small></div></div><div class="td c4" style="width:164.5px"><b>Rajabova Gavhar</b></div><div class="td c5" style="width:99px">1976</div><div class="td c6" style="width:95px">Ayol</div><div class="td c7" style="width:115px"><div>Sharlauk<br>mahallasi</div></div><div class="td c8" style="width:116.5px"><div>Tibbiy xodim</div></div><div class="td c9" style="width:160.5px">Tibbiy ko'rik</div><div class="td c10" style="width:340px"><div class="xbox"><svg class="ic" viewBox="0 0 16 16"><circle cx="8" cy="8" r="7"/><path d="M8 4.200v4.6"/><circle cx="8" cy="11.4" r=".5" fill="currentColor" stroke="none"/></svg><span>Xulosa kiritilmagan</span></div></div></div>
<div class="tr alt"><div class="td c0" style="width:96.3px">708</div><div class="td c1" style="width:97.8px">12</div><div class="td c2" style="width:91.9px">478</div><div class="td c3" style="width:95.5px"><div>06.02.2026<small>11:10</small></div></div><div class="td c4" style="width:164.5px"><b>Munirov Mansur</b></div><div class="td c5" style="width:99px">1991</div><div class="td c6" style="width:95px">Erkak</div><div class="td c7" style="width:115px"><div>Saxovat<br>mahallasi</div></div><div class="td c8" style="width:116.5px"><div>Imkoniyati<br>cheklangan</div></div><div class="td c9" style="width:160.5px">Tibbiy ko'rik</div><div class="td c10" style="width:340px"><div class="xbox"><svg class="ic" viewBox="0 0 16 16"><circle cx="8" cy="8" r="7"/><path d="M8 4.200v4.6"/><circle cx="8" cy="11.4" r=".5" fill="currentColor" stroke="none"/></svg><span>Xulosa kiritilmagan</span></div></div></div>
<div class="tr"><div class="td c0" style="width:96.3px">707</div><div class="td c1" style="width:97.8px">11</div><div class="td c2" style="width:91.9px">477</div><div class="td c3" style="width:95.5px"><div>06.02.2026<small>10:58</small></div></div><div class="td c4" style="width:164.5px"><b>Madiyarov Qalach Q</b></div><div class="td c5" style="width:99px">2004</div><div class="td c6" style="width:95px">Erkak</div><div class="td c7" style="width:115px"><div>Yakkachiqir<br>mahallasi</div></div><div class="td c8" style="width:116.5px"><div>Hotel day</div></div><div class="td c9" style="width:160.5px">Pulli tibbiy ko'irk</div><div class="td c10" style="width:340px"><div class="xbox"><svg class="ic" viewBox="0 0 16 16"><circle cx="8" cy="8" r="7"/><path d="M8 4.200v4.6"/><circle cx="8" cy="11.4" r=".5" fill="currentColor" stroke="none"/></svg><span>Xulosa kiritilmagan</span></div></div></div>
</div>
<div class="tfoot"><div class="btn b-filter"><svg class="ic" viewBox="0 0 16 16"><path d="M1.2 1.400h13.600L9.6 8v6.600H6.400V8z"/></svg><span style="letter-spacing:-0.37px">FILTRLASH</span><i class="badge" style="letter-spacing:0.34px">3309</i></div><div class="pager"><div class="pg dis" style="left:1097px"><svg class="ic" viewBox="0 0 16 16"><path d="M7.4 3.400L2.8 8l4.6 4.600M13 3.400L8.4 8l4.6 4.6"/></svg></div><div class="pg dis" style="left:1141px"><svg class="ic" viewBox="0 0 16 16"><path d="M10.2 3.200L5.4 8l4.8 4.8"/></svg></div><div class="pg act" style="left:1186px">1</div><div class="pg" style="left:1230px">2</div><div class="pg" style="left:1274px">3</div><div class="pg" style="left:1319px"><svg class="ic" viewBox="0 0 16 16"><path d="M5.8 3.200L10.6 8l-4.8 4.8"/></svg></div><div class="pg" style="left:1363px"><svg class="ic" viewBox="0 0 16 16"><path d="M8.6 3.400L13.2 8l-4.6 4.600M3 3.400L7.6 8 3 12.6"/></svg></div></div></div>
</div>
</div>
</body>
</html>
